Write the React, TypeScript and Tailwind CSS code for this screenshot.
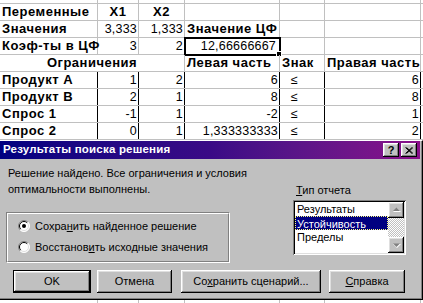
import React from 'react';

const ff = "font-['Liberation_Sans',Arial,sans-serif]";
const raised = 'shadow-[inset_-1px_-1px_#000,inset_1px_1px_#fff,inset_-2px_-2px_#808080,inset_2px_2px_#dfdfdf]';
const sunken = 'shadow-[inset_1px_1px_#808080,inset_-1px_-1px_#fff,inset_2px_2px_#000,inset_-2px_-2px_#dfdfdf]';

const colW = ['w-[98px]', 'w-[41px]', 'w-[46px]', 'w-[95px]', 'w-[45px]', 'w-[96px]'];

type CellProps = {
  w: string;
  text?: React.ReactNode;
  bold?: boolean;
  align?: 'l' | 'r' | 'c';
  dark?: boolean;
  extra?: string;
  children?: React.ReactNode;
};

function Cell({ w, text, bold, align = 'l', dark, extra = '', children }: CellProps) {
  const al = align === 'r' ? 'justify-end pr-[1px]' : align === 'c' ? 'justify-center' : 'justify-start pl-[2px]';
  return (
    <div
      className={`relative flex h-full shrink-0 items-center overflow-visible whitespace-nowrap border-r ${
        dark ? 'border-r-black' : 'border-r-[#c0c0c0]'
      } ${w} ${al} ${bold ? 'text-[13px] font-bold tracking-[0.5px]' : 'text-[12.5px] tracking-[0.2px]'} ${extra}`}
    >
      {text}
      {children}
    </div>
  );
}

function Row({ children, h = 'h-[17px]' }: { children: React.ReactNode; h?: string }) {
  return <div className={`flex ${h} border-b border-b-[#c0c0c0]`}>{children}</div>;
}

const tableRows = [
  { name: 'Продукт A', x1: '1', x2: '2', left: '6', right: '6' },
  { name: 'Продукт B', x1: '2', x2: '1', left: '8', right: '8' },
  { name: 'Спрос 1', x1: '-1', x2: '1', left: '-2', right: '1' },
  { name: 'Спрос 2', x1: '0', x2: '1', left: '1,333333333', right: '2' },
];

function Sheet() {
  return (
    <div className="flex flex-col bg-white text-black">
      <Row h="h-[4px]">
        {colW.map((w) => (
          <Cell key={w} w={w} />
        ))}
        <div className="flex-1" />
      </Row>
      <Row>
        <Cell w={colW[0]} text="Переменные" bold />
        <Cell w={colW[1]} text="X1" bold align="c" />
        <Cell w={colW[2]} text="X2" bold align="c" />
        <Cell w={colW[3]} />
        <Cell w={colW[4]} />
        <Cell w={colW[5]} />
        <div className="flex-1" />
      </Row>
      <Row>
        <Cell w={colW[0]} text="Значения" bold />
        <Cell w={colW[1]} text="3,333" align="r" />
        <Cell w={colW[2]} text="1,333" align="r" />
        <Cell w={colW[3]} text="Значение ЦФ" bold />
        <Cell w={colW[4]} />
        <Cell w={colW[5]} />
        <div className="flex-1" />
      </Row>
      <Row>
        <Cell w={colW[0]} text="Коэф-ты в ЦФ" bold />
        <Cell w={colW[1]} text="3" align="r" />
        <Cell w={colW[2]} text="2" align="r" />
        <Cell w={colW[3]} text="12,66666667" align="r" extra="pr-[3px]">
          {/* active cell frame */}
          <div className="absolute -left-[1px] -top-[1px] h-[19px] w-[97px] border-2 border-black" />
          <div className="absolute -bottom-[3px] -right-[3px] h-[6px] w-[6px] border border-white bg-black" />
        </Cell>
        <Cell w={colW[4]} />
        <Cell w={colW[5]} />
        <div className="flex-1" />
      </Row>
      <Row>
        <Cell w="w-[185px]" text="Ограничения" bold align="c" />
        <Cell w={colW[3]} text="Левая часть" bold />
        <Cell w={colW[4]} text="Знак" bold />
        <Cell w={colW[5]} text="Правая часть" bold />
        <div className="flex-1" />
      </Row>
      {tableRows.map((r) => (
        <Row key={r.name}>
          <Cell w={colW[0]} text={r.name} bold dark />
          <Cell w={colW[1]} text={r.x1} align="r" dark />
          <Cell w={colW[2]} text={r.x2} align="r" dark />
          <Cell w={colW[3]} text={r.left} align="r" dark />
          <Cell w={colW[4]} text="≤" dark extra="pl-[11px]" />
          <Cell w={colW[5]} text={r.right} align="r" dark />
          <div className="flex-1" />
        </Row>
      ))}
    </div>
  );
}

function Radio({ checked }: { checked?: boolean }) {
  return (
    <svg width="12" height="12" viewBox="0 0 12 12" className="shrink-0">
      <circle cx="6" cy="6" r="5.5" fill="#fff" />
      <path d="M2.1 9.9A5.5 5.5 0 0 1 9.9 2.1" stroke="#808080" fill="none" />
      <path d="M9.9 2.1A5.5 5.5 0 0 1 2.1 9.9" stroke="#fff" fill="none" />
      <path d="M2.8 9.2A4.5 4.5 0 0 1 9.2 2.8" stroke="#000" fill="none" />
      <path d="M9.2 2.8A4.5 4.5 0 0 1 2.8 9.2" stroke="#dfdfdf" fill="none" />
      {checked && <circle cx="6" cy="6" r="2" fill="#000" />}
    </svg>
  );
}

function ScrollBtn({ up }: { up?: boolean }) {
  return (
    <div className={`flex h-[16px] w-[16px] items-center justify-center bg-[#c0c0c0] ${raised}`}>
      <svg width="9" height="6" viewBox="0 0 9 6">
        {up ? (
          <>
            <path d="M5 1L9 5H1z" fill="#fff" />
            <path d="M4.5 0.5L8 4H1z" fill="#808080" />
          </>
        ) : (
          <>
            <path d="M1 2h8L5 6z" fill="#fff" />
            <path d="M1 1.5h7L4.5 5z" fill="#808080" />
          </>
        )}
      </svg>
    </div>
  );
}

function Btn({ children, w, def }: { children: React.ReactNode; w: string; def?: boolean }) {
  const inner = (
    <div className={`flex h-full w-full items-center justify-center bg-[#c0c0c0] ${raised}`}>{children}</div>
  );
  return def ? (
    <div className={`h-[23px] shrink-0 border border-black ${w}`}>{inner}</div>
  ) : (
    <div className={`h-[23px] shrink-0 ${w}`}>{inner}</div>
  );
}

function Dialog() {
  return (
    <div className="border-t border-r border-b border-t-white border-r-black border-b-black">
      <div className="flex flex-col border-r border-b border-r-[#808080] border-b-[#808080] bg-[#c0c0c0] pr-px">
        <div className="flex h-[18px] items-center justify-between bg-gradient-to-r from-[#000080] via-[#3a0a86] to-[#8a0e8a] pl-[3px] pr-[3px]">
          <span className="text-[11.5px] font-bold tracking-[0.2px] text-white">Результаты поиска решения</span>
          <div className="flex gap-[2px]">
            <div className={`flex h-[14px] w-[16px] items-center justify-center bg-[#c0c0c0] text-[11px] font-bold leading-none ${raised}`}>
              ?
            </div>
            <div className={`flex h-[14px] w-[16px] items-center justify-center bg-[#c0c0c0] ${raised}`}>
              <svg width="8" height="7" viewBox="0 0 8 7">
                <path d="M0.5 0.5L7 6.5M1.5 0.5L8 6.5M7 0.5L0.5 6.5M8 0.5L1.5 6.5" stroke="#000" strokeWidth="1" />
              </svg>
            </div>
          </div>
        </div>

        <div className="flex h-[139px] flex-col pl-[6px] pt-[6px] text-[11px] text-black">
          <div className="flex">
            <div className="flex w-[224px] flex-col">
              <div className="pl-[2px] leading-[16px]">
                <div className="whitespace-nowrap">Решение найдено. Все ограничения и условия</div>
                <div>оптимальности выполнены.</div>
              </div>
              <div className="mt-[15px] h-[51px] border border-t-[#808080] border-l-[#808080] border-r-white border-b-white">
                <div className="flex h-full flex-col gap-[7px] border border-t-white border-l-white border-r-[#808080] border-b-[#808080] pl-[10px] pt-[5px]">
                  <div className="flex h-[14px] items-center gap-[5px]">
                    <Radio checked />
                    <span>
                      Сохра<span className="underline">н</span>ить найденное решение
                    </span>
                  </div>
                  <div className="flex h-[14px] items-center gap-[5px]">
                    <Radio />
                    <span>
                      Восстанов<span className="underline">и</span>ть исходные значения
                    </span>
                  </div>
                </div>
              </div>
            </div>

            <div className="ml-[63px] mt-[18px] flex w-[113px] flex-col">
              <div className="pl-[3px] leading-[14px]">
                <span className="underline">Т</span>ип отчета
              </div>
              <div className={`mt-[3px] flex h-[55px] bg-white p-[2px] ${sunken}`}>
                <div className="flex flex-1 flex-col leading-[14px]">
                  <div className="h-[14px] pl-[2px]">Результаты</div>
                  <div className="h-[14px] border border-dotted border-[#ffff80] bg-[#000080] pl-px text-white">Устойчивость</div>
                  <div className="h-[14px] pl-[2px]">Пределы</div>
                </div>
                <div className="flex w-[16px] flex-col bg-[repeating-conic-gradient(#c0c0c0_0_25%,#fff_0_50%)] bg-[length:2px_2px]">
                  <ScrollBtn up />
                  <div className="flex-1" />
                  <ScrollBtn />
                </div>
              </div>
            </div>
          </div>

          <div className="mt-[7px] flex items-center">
            <div className="ml-[7px]">
              <Btn w="w-[78px]" def>
                OK
              </Btn>
            </div>
            <div className="ml-[6px]">
              <Btn w="w-[75px]">Отмена</Btn>
            </div>
            <div className="ml-[9px]">
              <Btn w="w-[140px]">
                <span>
                  Со<span className="underline">х</span>ранить сценарий...
                </span>
              </Btn>
            </div>
            <div className="ml-[8px]">
              <Btn w="w-[76px]">
                <span>
                  <span className="underline">С</span>правка
                </span>
              </Btn>
            </div>
          </div>
        </div>
      </div>
    </div>
  );
}

export default function App() {
  return (
    <div className={`h-[303px] w-[423px] overflow-hidden bg-white ${ff}`}>
      <Sheet />
      <Dialog />
      <div className="flex h-[10px]">
        {colW.map((w) => (
          <div key={w} className={`h-full shrink-0 border-r border-r-[#c0c0c0] ${w}`} />
        ))}
      </div>
    </div>
  );
}
